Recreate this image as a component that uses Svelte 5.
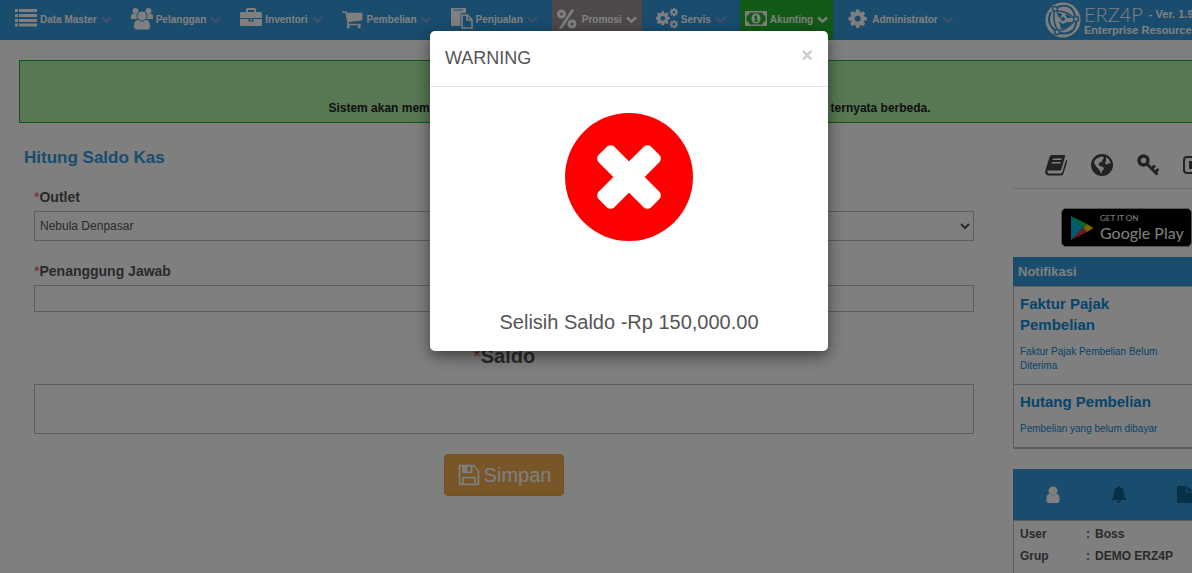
<script lang="ts">
	interface MenuItem {
		icon: string;
		label: string;
		tone?: 'gray' | 'green';
	}

	const menu: MenuItem[] = [
		{ icon: 'list', label: 'Data Master' },
		{ icon: 'users', label: 'Pelanggan' },
		{ icon: 'briefcase', label: 'Inventori' },
		{ icon: 'cart', label: 'Pembelian' },
		{ icon: 'paste', label: 'Penjualan' },
		{ icon: 'percent', label: 'Promosi', tone: 'gray' },
		{ icon: 'cogs', label: 'Servis' },
		{ icon: 'money', label: 'Akunting', tone: 'green' },
		{ icon: 'cog', label: 'Administrator' }
	];

	const shortcuts = [
		{ icon: 'book', label: 'Panduan' },
		{ icon: 'globe', label: 'Situs' },
		{ icon: 'key', label: 'Kata sandi' },
		{ icon: 'video', label: 'Video' }
	];

	const notifications = [
		{ title: 'Faktur Pajak Pembelian', text: 'Faktur Pajak Pembelian Belum Diterima' },
		{ title: 'Hutang Pembelian', text: 'Pembelian yang belum dibayar' }
	];

	const tabs = [
		{ icon: 'user', label: 'Profil' },
		{ icon: 'bell', label: 'Pengingat' },
		{ icon: 'file', label: 'Berkas' }
	];

	const profile = [
		['User', 'Boss'],
		['Grup', 'DEMO ERZ4P']
	];

	let activeTab = $state('user');
	let showWarning = $state(true);
	let outlet = $state('Nebula Denpasar');
	let person = $state('');
	let balance = $state('');

	const cogPath =
		'M1152 896q0-106-75-181t-181-75-181 75-75 181 75 181 181 75 181-75 75-181zm512-109v222q0 12-8 23t-20 13l-185 28q-19 54-39 91 35 50 107 138 10 12 10 25t-9 23q-27 37-99 108t-94 71q-12 0-26-9l-138-108q-44 23-91 38-16 136-29 186-7 28-36 28h-222q-14 0-24.500-8.500t-11.500-21.500l-28-184q-49-16-90-37l-141 107q-10 9-25 9-14 0-25-11-126-114-165-168-7-10-7-23 0-12 8-23 15-21 51-66.500t54-70.500q-27-50-41-99l-183-27q-13-2-21-12.500t-8-23.500v-222q0-12 8-23t19-13l186-28q14-46 39-92-40-57-107-138-10-12-10-24 0-10 9-23 26-36 98.500-107.500t94.500-71.500q13 0 26 10l138 107q44-23 91-38 16-136 29-186 7-28 36-28h222q14 0 24.500 8.500t11.500 21.500l28 184q49 16 90 37l142-107q9-9 24-9 13 0 25 10 129 119 165 170 7 8 7 22 0 12-8 23-15 21-51 66.500t-54 70.500q26 50 41 98l183 28q13 2 21 12.500t8 23.500z';
</script>

{#snippet icon(name: string)}
	<svg class="icon" viewBox="0 0 22 22" fill="currentColor" aria-hidden="true">
		{#if name === 'list'}
			{#each [1, 6, 11, 15.5] as y}
				<rect x="0" {y} width="3" height="3" />
				<rect x="4" {y} width="18" height="3" />
			{/each}
		{:else if name === 'users'}
			<circle cx="4.500" cy="3" r="3" />
			<circle cx="17.500" cy="3" r="3" />
			<path d="M0 10.500V8.500C0 6.500 1 6 2.500 6H7v5H1.500Q0 11.500 0 10.500zM22 10.500V8.500C22 6.500 21 6 19.500 6H15v5h5.500q1.500.5 1.500-.5z" />
			<path d="M3 18.500C3 15 4 12 6.500 12h9c2.500 0 3.500 3 3.500 6.500 0 2-1 3-2.700 3H5.700C4 21.500 3 20.500 3 18.500z" />
			<circle class="cut" cx="11" cy="8" r="5" />
		{:else if name === 'briefcase'}
			<path d="M6 4V1.500Q6 0 7.500 0h7Q16 0 16 1.500V4h4.500Q22 4 22 5.500V10H0V5.500Q0 4 1.500 4zM8 4h6V2H8z" />
			<path d="M0 11h8.500v2.500h5V11H22v5.500q0 1.500-1.500 1.500h-19Q0 18 0 16.500zM9.800 11h2.400v1.300H9.800z" />
		{:else if name === 'cart'}
			<path
				transform="translate(-.8 0) scale(.01228)"
				d="M704 1536q0 52-38 90t-90 38-90-38-38-90 38-90 90-38 90 38 38 90zm896 0q0 52-38 90t-90 38-90-38-38-90 38-90 90-38 90 38 38 90zm128-1088v512q0 24-16.500 42.500t-40.500 21.500l-1044 122q13 60 13 70 0 16-24 64h920q26 0 45 19t19 45-19 45-45 19h-1024q-26 0-45-19t-19-45q0-11 8-31.500t16-36 21.500-40 15.500-29.500l-177-823h-204q-26 0-45-19t-19-45 19-45 45-19h256q16 0 28.500 6.500t19.500 15.500 13 24.500 8 26 5.500 29.500 4.500 26h1201q26 0 45 19t19 45z"
			/>
		{:else if name === 'paste'}
			<path d="M1 0h13q1 0 1 1v4h-4.500L9.500 6.500V18H1q-1 0-1-1V1q0-1 1-1zm2 1.500v1h9v-1z" fill-rule="evenodd" />
			<path d="M11 7h5.500L21 11.500V20H11zM16 7.500V12h4.500" fill="none" stroke="currentColor" stroke-width="1.600" />
		{:else if name === 'percent'}
			<path d="M14.500 1.500h3L5 20.500H2z" />
			<circle cx="4.500" cy="6" r="3" fill="none" stroke="currentColor" stroke-width="3" />
			<circle cx="15" cy="16" r="3" fill="none" stroke="currentColor" stroke-width="3" />
		{:else if name === 'cogs'}
			<path transform="translate(-1.500 2) scale(.0092)" d={cogPath} />
			<path transform="translate(13 -.8) scale(.0055)" d={cogPath} />
			<path transform="translate(13 11.300) scale(.0055)" d={cogPath} />
		{:else if name === 'money'}
			<path d="M0 3h22v15H0zM4.500 4.500Q4.500 7.500 1.500 7.500v6q3 0 3 3h13q0-3 3-3v-6q-3 0-3-3z" fill-rule="evenodd" />
			<path d="M11 5.500c3 0 4.500 2 4.500 5s-1.500 5-4.500 5-4.500-2-4.500-5 1.500-5 4.500-5zm.2 1.700L9 8.700v1h1.300V12.500H9v1.200h4.200v-1.200H12V7.200z" fill-rule="evenodd" />
		{:else if name === 'cog'}
			<path transform="scale(.0119)" d={cogPath} />
		{:else if name === 'book'}
			<path d="M7 1h12q1.500 0 1 1.500L16.500 15q-.5 1.500-2 1.500H3.500q-1.500 0-1 1.500t1.500 1.500h11.500q1.500 0 2-1.500L21 6q1.500.5 1 2L18.500 19.500Q18 21.500 16 21.500H3.500Q1 21.500.3 19q-.5-1 .2-3L4.500 3Q5.200 1 7 1zm1 3.500L7.600 6h8.800l.4-1.500zM7 8l-.4 1.500h8.800L15.800 8z" fill-rule="evenodd" />
		{:else if name === 'globe'}
			<circle cx="11" cy="11" r="11" />
			<path class="land" d="M9 3l3-.5 1 2-2 1.500.5 1.500-3 1-1 2 1.500 1.500L12 13l1 2-2 2-1 3-1.500-4L6 13.500 3 9l1-3 2-1.500zM15 3l3 2.500 2 4-2-.5-2 1.500-2-1 1-3z" />
		{:else if name === 'key'}
			<g fill="none" stroke="currentColor">
				<circle cx="6.500" cy="6.500" r="4.500" stroke-width="3.400" />
				<path d="M9.500 9.500L20.500 20.500M14 15.500l4-4M17.500 19l4-4" stroke-width="3" />
			</g>
		{:else if name === 'video'}
			<rect x="1" y="3" width="20" height="16" rx="3" fill="none" stroke="currentColor" stroke-width="2" />
			<path d="M6 7h9v8H6z" />
		{:else if name === 'user'}
			<circle cx="11" cy="7" r="4.500" />
			<path d="M4.500 14.500q0-4.500 3-4.500 3.500 3 7 0 3 0 3 4.500v2q0 2.500-2 2.500h-9q-2 0-2-2.500z" />
		{:else if name === 'bell'}
			<path d="M11 2q1 0 1 1.200c3 .6 4 2.800 4 5.300 0 4 1 5.500 3 7.500H3c2-2 3-3.500 3-7.500 0-2.500 1-4.700 4-5.300Q10 2 11 2zM8.800 16.500h4.400q-.3 2.500-2.200 2.500t-2.200-2.500z" />
		{:else if name === 'file'}
			<path d="M3 2h9v6.500h7V19H3zM13.200 2L19 7.500h-5.800z" />
		{/if}
	</svg>
{/snippet}

{#snippet chevron()}
	<svg class="chevron" viewBox="0 0 11 11" fill="none" stroke="currentColor" stroke-width="2.400" aria-hidden="true">
		<path d="M1 3.500l4.500 4.200L10 3.500" />
	</svg>
{/snippet}

<div class="page">
	<header class="topbar">
		<nav class="menu">
			{#each menu as item}
				<button type="button" class="menu-item {item.tone ?? ''}">
					{@render icon(item.icon)}
					<span>{item.label}</span>
					{@render chevron()}
				</button>
			{/each}
		</nav>
		<div class="brand">
			<svg class="brand-logo" viewBox="0 0 36 36" aria-hidden="true">
				<circle cx="18" cy="18" r="17.500" fill="#fff" />
				<g fill="none" stroke="#3498db">
					<path d="M13 5q8-3 13 1 3 3 4 8" stroke-width="2" />
					<path d="M6 10q-4 8 0 14 2 3 4 4" stroke-width="2" />
					<path d="M15 31q9 2 14-4 2-3 2-7" stroke-width="2" />
					<path d="M12 9q10 0 17 7M9 10q-1 10 3 17M29 19q-6 8-15 10" stroke-width="1.500" />
					<circle cx="10" cy="7" r="2.500" fill="#fff" stroke-width="1.500" />
					<circle cx="31" cy="17" r="2.500" fill="#fff" stroke-width="1.500" />
					<circle cx="12" cy="30" r="2.500" fill="#fff" stroke-width="1.500" />
				</g>
				<path d="M11 10l6 2-2 5zM20 12q5 1 7 4h-5zM22 20h5q-4 6-11 7l-2-8 4 3z" fill="#3498db" />
				<circle cx="18" cy="17" r="2" fill="#3498db" />
			</svg>
			<div class="brand-text">
				<div class="brand-top"><span class="brand-name">ERZ4P</span> - Ver. 1.9</div>
				<div>Enterprise Resources</div>
			</div>
		</div>
	</header>

	<div class="content">
		<div class="alert">
			Sistem akan memberikan peringatan apabila saldo yang diinput dengan saldo di sistem ternyata berbeda.
		</div>

		<div class="columns">
			<main>
				<h1>Hitung Saldo Kas</h1>
				<form class="panel" onsubmit={(e) => e.preventDefault()}>
					<label for="outlet"><span class="required">*</span>Outlet</label>
					<select id="outlet" bind:value={outlet}>
						<option>Nebula Denpasar</option>
					</select>
					<label for="person"><span class="required">*</span>Penanggung Jawab</label>
					<input id="person" type="text" bind:value={person} />
					<label for="balance" class="balance-label"><span class="required">*</span>Saldo</label>
					<input id="balance" class="balance" type="text" bind:value={balance} />
					<button type="submit" class="save">
						<svg viewBox="0 0 1792 1792" fill="currentColor" aria-hidden="true">
							<path
								d="M512 1536h768v-384h-768v384zm896 0h128v-896q0-14-10-38.500t-20-34.500l-281-281q-10-10-34-20t-39-10v416q0 40-28 68t-68 28h-576q-40 0-68-28t-28-68v-416h-128v1280h128v-416q0-40 28-68t68-28h832q40 0 68 28t28 68v416zm-384-928v-320q0-13-9.500-22.500t-22.500-9.500h-192q-13 0-22.500 9.500t-9.500 22.500v320q0 13 9.500 22.500t22.500 9.500h192q13 0 22.500-9.500t9.500-22.500zm640 32v928q0 40-28 68t-68 28h-1344q-40 0-68-28t-28-68v-1344q0-40 28-68t68-28h928q40 0 88 20t76 48l280 280q28 28 48 76t20 88z"
							/>
						</svg>
						Simpan
					</button>
				</form>
			</main>

			<aside>
				<div class="shortcuts">
					{#each shortcuts as item}
						<a href="#{item.icon}" aria-label={item.label}>{@render icon(item.icon)}</a>
					{/each}
				</div>

				<a class="play" href="#play">
					<svg viewBox="0 0 24 26" aria-hidden="true">
						<path d="M1 1v24l12-12z" fill="#00b8e0" />
						<path d="M1 1l12 12 4-4z" fill="#00d26a" />
						<path d="M1 25l12-12 4 4z" fill="#e8304a" />
						<path d="M17 9l6.500 4-6.500 4-4-4z" fill="#ffc400" />
					</svg>
					<span class="play-text">
						<small>GET IT ON</small>
						<span>Google Play</span>
					</span>
				</a>

				<section class="notifications">
					<h2>Notifikasi</h2>
					<ul>
						{#each notifications as item}
							<li>
								<a href="#notifikasi">
									<strong>{item.title}</strong>
									<span>{item.text}</span>
								</a>
							</li>
						{/each}
					</ul>
				</section>

				<section class="profile">
					<div class="tabs">
						{#each tabs as tab}
							<button
								type="button"
								class:active={activeTab === tab.icon}
								aria-label={tab.label}
								onclick={() => (activeTab = tab.icon)}
							>
								{@render icon(tab.icon)}
							</button>
						{/each}
					</div>
					<table>
						<tbody>
							{#each profile as [name, value]}
								<tr>
									<th scope="row">{name}</th>
									<td>:</td>
									<td>{value}</td>
								</tr>
							{/each}
						</tbody>
					</table>
				</section>
			</aside>
		</div>
	</div>

	{#if showWarning}
		<div class="backdrop">
			<div class="modal" role="dialog" aria-modal="true" aria-labelledby="warning-title">
				<div class="modal-header">
					<h4 id="warning-title">WARNING</h4>
					<button type="button" class="close" aria-label="Close" onclick={() => (showWarning = false)}>×</button>
				</div>
				<div class="modal-body">
					<svg viewBox="0 0 128 128" aria-hidden="true">
						<circle cx="64" cy="64" r="64" fill="#f00" />
						<g fill="#fff" transform="translate(64 64) rotate(45)">
							<rect x="-37" y="-11" width="74" height="22" rx="5" />
							<rect x="-11" y="-37" width="22" height="74" rx="5" />
						</g>
					</svg>
					<p>Selisih Saldo -Rp 150,000.00</p>
				</div>
			</div>
		</div>
	{/if}
</div>

<style>
	:global(body) {
		overflow: hidden;
		background: #fff;
		font-family: 'Liberation Sans', Arial, sans-serif;
		color: #555;
	}

	/* runs wider than the window, the right edge scrolls out of view */
	.page {
		position: relative;
		width: calc(100% + 66px);
		min-height: 100vh;
		background: #fefefe;
	}

	button,
	input,
	select {
		font-family: inherit;
	}

	a {
		text-decoration: none;
	}

	.icon {
		display: block;
		width: 22px;
		height: 22px;
		flex: none;
	}

	/* Top bar */
	.topbar {
		display: flex;
		justify-content: space-between;
		height: 40px;
		padding-left: 10px;
		background: #3498db;
		color: #fff;
	}

	.menu {
		display: flex;
		gap: 9px;
	}

	.menu-item {
		display: flex;
		align-items: center;
		gap: 3px;
		padding: 0 5px 2px;
		border: 0;
		background: none;
		color: #fff;
		font-size: 10px;
		font-weight: bold;
		white-space: nowrap;
	}

	.menu-item.gray {
		background: #9b9393;
	}

	.menu-item.green {
		background: #24b42c;
	}

	.cut {
		stroke: #3498db;
		stroke-width: 1;
	}

	.land {
		fill: #fefefe;
	}

	.chevron {
		width: 11px;
		height: 11px;
		margin-left: 1px;
		color: #7a9fd8;
	}

	.gray .chevron,
	.green .chevron {
		color: #fff;
	}

	.brand {
		display: flex;
		align-items: center;
		gap: 3px;
		width: 213px;
		font-size: 11px;
		font-weight: bold;
		line-height: 14px;
		white-space: nowrap;
	}

	.brand-logo {
		width: 36px;
		height: 36px;
	}

	.brand-text {
		padding-top: 2px;
	}

	.brand-top {
		display: flex;
		align-items: center;
		gap: 6px;
		height: 18px;
	}

	.brand-name {
		font-family: Lato, sans-serif;
		font-size: 20px;
		font-weight: 300;
	}

	/* Content */
	.content {
		padding: 20px 18px 0 19px;
	}

	.alert {
		box-sizing: border-box;
		height: 63px;
		padding-top: 38px;
		border: 1px solid #1cae2c;
		background: #b0f0a8;
		color: #222;
		font-size: 12px;
		font-weight: bold;
		line-height: 18px;
		text-align: center;
	}

	.columns {
		display: grid;
		grid-template-columns: minmax(0, 1fr) 227px;
		gap: 25px;
		margin-top: 24px;
	}

	h1 {
		margin: 0 0 3px;
		padding-left: 5px;
		color: #3498db;
		font-size: 17px;
		line-height: 22px;
	}

	.panel {
		display: flex;
		flex-direction: column;
		padding: 15px 14px 34px 15px;
		background: #fff;
	}

	label {
		margin-bottom: 4px;
		font-size: 14px;
		font-weight: bold;
		line-height: 20px;
	}

	.required {
		color: #e74c3c;
		font-weight: normal;
	}

	select,
	input {
		box-sizing: border-box;
		width: 100%;
		border: 1px solid #bbb;
		border-radius: 0;
		background: #fff;
		color: #555;
		font-size: 12px;
	}

	select {
		height: 30px;
		margin-bottom: 20px;
		padding: 0 1px;
	}

	input {
		height: 27px;
		padding: 0 5px;
	}

	.balance-label {
		margin: 32px 0 16px;
		font-size: 20px;
		line-height: 24px;
		text-align: center;
	}

	.balance {
		height: 50px;
		font-size: 20px;
		text-align: center;
	}

	.save {
		display: flex;
		align-items: center;
		align-self: center;
		gap: 3px;
		height: 42px;
		margin-top: 20px;
		padding: 0 12px;
		border: 1px solid #eea236;
		border-radius: 4px;
		background: #f0ad4e;
		color: #fff;
		font-size: 20px;
	}

	.save svg {
		width: 24px;
		height: 24px;
	}

	/* Sidebar */
	.shortcuts {
		display: flex;
		justify-content: center;
		gap: 24px;
		padding: 7px 4px 12px 0;
		border-bottom: 1px solid #ddd;
	}

	.shortcuts a {
		color: #444;
	}

	.play {
		box-sizing: border-box;
		display: flex;
		align-items: center;
		gap: 6px;
		width: 131px;
		height: 39px;
		margin: 19px auto 10px;
		padding-left: 8px;
		border: 1px solid #a6a6a6;
		border-radius: 5px;
		background: #000;
		color: #fff;
		font-family: Lato, sans-serif;
		font-size: 16px;
		line-height: 19px;
		white-space: nowrap;
	}

	.play svg {
		width: 24px;
		height: 26px;
		flex: none;
	}

	.play-text {
		display: flex;
		flex-direction: column;
	}

	.play-text small {
		font-size: 8px;
		line-height: 9px;
	}

	h2 {
		margin: 0;
		padding-left: 5px;
		background: #3498db;
		color: #fff;
		font-size: 13px;
		line-height: 29px;
	}

	ul {
		margin: 0;
		padding: 0;
		border: 1px solid #bbb;
		border-bottom-width: 2px;
		list-style: none;
	}

	li {
		padding: 6px 60px 11px 6px;
	}

	li + li {
		border-top: 1px solid #bbb;
	}

	li a {
		display: flex;
		flex-direction: column;
		gap: 10px;
		color: #0c8ad8;
		font-size: 10px;
		line-height: 14px;
	}

	li strong {
		font-size: 15px;
		line-height: 21px;
	}

	.profile {
		margin-top: 20px;
	}

	.tabs {
		display: flex;
		height: 51px;
		padding-left: 7px;
		background: #3498db;
	}

	.tabs button {
		display: flex;
		align-items: center;
		justify-content: center;
		width: 66px;
		padding: 0;
		border: 0;
		background: none;
		color: #10608f;
	}

	.tabs .active {
		color: #fff;
	}

	table {
		width: 100%;
		padding: 2px 0 40px 4px;
		border: 1px solid #bbb;
		border-spacing: 0;
		font-size: 12px;
		font-weight: bold;
		line-height: 22px;
		text-align: left;
	}

	th,
	td {
		padding: 0 2px;
	}

	th {
		width: 62px;
	}

	td:nth-child(2) {
		width: 5px;
	}

	/* Modal */
	.backdrop {
		position: absolute;
		inset: 0;
		padding-top: 31px;
		background: rgba(0, 0, 0, 0.5);
	}

	.modal {
		width: 398px;
		margin: 0 auto;
		border-radius: 5px;
		background: #fff;
		box-shadow: 0 5px 15px rgba(0, 0, 0, 0.5);
	}

	.modal-header {
		display: flex;
		justify-content: space-between;
		padding: 15px;
		border-bottom: 1px solid #e5e5e5;
	}

	h4 {
		margin: 0;
		font-size: 18px;
		font-weight: normal;
		line-height: 25px;
	}

	.close {
		height: 18px;
		padding: 0;
		border: 0;
		background: none;
		color: #ccc;
		font-size: 20px;
		font-weight: bold;
		line-height: 18px;
	}

	.modal-body {
		display: flex;
		flex-direction: column;
		align-items: center;
		padding: 26px 15px 15px;
	}

	.modal-body svg {
		width: 128px;
		height: 128px;
	}

	p {
		margin: 67px 0 0;
		font-size: 20px;
		line-height: 28px;
	}
</style>
